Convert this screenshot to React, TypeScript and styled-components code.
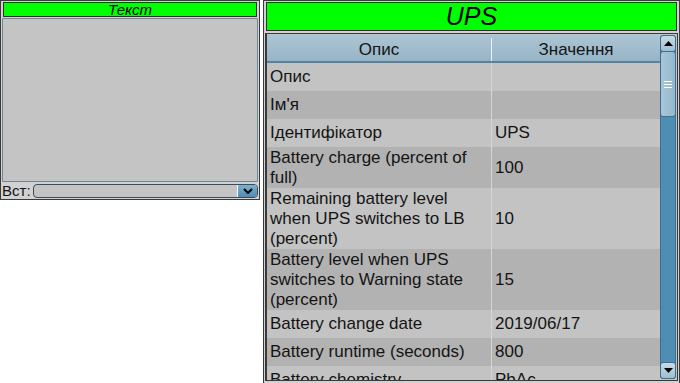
import React from 'react';
import styled, { createGlobalStyle } from 'styled-components';

const Global = createGlobalStyle`
  body {
    margin: 0;
    background: #ffffff;
    font-family: "Liberation Sans", Arial, sans-serif;
    color: #141414;
  }
`;

const Screen = styled.div`
  display: flex;
  align-items: flex-start;
  gap: 3px;
  width: 680px;
  height: 383px;
  overflow: hidden;
`;

const Panel = styled.div<{ $w: number; $h: number }>`
  box-sizing: border-box;
  width: ${p => p.$w}px;
  height: ${p => p.$h}px;
  border: 1px solid #3a3a3a;
  background: #d2d2d2;
  display: flex;
  flex-direction: column;
  padding: 1px;
  gap: 1px;
`;

const Title = styled.div<{ $h: number; $size: number }>`
  box-sizing: border-box;
  height: ${p => p.$h}px;
  margin: 0 1px;
  background: #00ff00;
  border: 1px solid #2e2e2e;
  font-style: italic;
  font-size: ${p => p.$size}px;
  line-height: ${p => p.$h - 2}px;
  text-align: center;
  color: #000;
  flex: none;
`;

const Canvas = styled.div`
  flex: 1;
  background: #c4c4c4;
  border: 1px solid #6c8796;
  border-radius: 1px;
`;

const Footer = styled.div`
  display: flex;
  align-items: center;
  height: 15px;
  gap: 2px;
  flex: none;
`;

const Label = styled.span`
  font-size: 15px;
  line-height: 15px;
  color: #141414;
`;

const Combo = styled.div`
  flex: 1;
  box-sizing: border-box;
  height: 14px;
  border: 1px solid #3c4c56;
  border-radius: 4px;
  background: #c4c4c4;
  display: flex;
  justify-content: flex-end;
  overflow: hidden;
`;

const ComboButton = styled.div`
  width: 19px;
  background: linear-gradient(#7fb0cc, #4f8db5);
  border-left: 1px solid #ffffff;
  display: flex;
  align-items: center;
  justify-content: center;
`;

const Table = styled.div`
  flex: 1;
  display: flex;
  margin: 1px 0 1px 0;
  border: 1px solid #3a3a3a;
  border-left-width: 2px;
  background: #c4c4c4;
  overflow: hidden;
`;

const Body = styled.div`
  flex: 1;
  display: flex;
  flex-direction: column;
  overflow: hidden;
`;

const Row = styled.div<{ $dark?: boolean; $min?: number }>`
  display: grid;
  grid-template-columns: 224px 1fr;
  min-height: ${p => p.$min ?? 28}px;
  background: ${p => (p.$dark ? '#b2b2b2' : '#c3c3c3')};
  flex: none;
`;

const HeadRow = styled(Row)`
  box-sizing: border-box;
  height: 28px;
  min-height: 28px;
  margin-top: 1px;
  background: linear-gradient(#acc5d4, #97b4c6);
  border-bottom: 2px solid #5583a2;
`;

const HeadCell = styled.div<{ $sep?: boolean }>`
  display: flex;
  align-items: center;
  justify-content: center;
  font-size: 17px;
  border-left: ${p => (p.$sep ? '1px solid #eef3f6' : 'none')};
  margin: ${p => (p.$sep ? '3px 0 0' : '0')};
  padding-top: ${p => (p.$sep ? '0' : '3px')};
`;

const Cell = styled.div<{ $sep?: boolean }>`
  display: flex;
  align-items: center;
  padding: 0 3px;
  font-size: 17px;
  line-height: 20px;
  border-left: ${p => (p.$sep ? '1px solid #d6d6d6' : 'none')};
`;

const ScrollBar = styled.div`
  width: 16px;
  margin: 1px 1px 1px 0;
  display: flex;
  flex-direction: column;
  background: #4f8db5;
  border: 1px solid #3b6e90;
  border-radius: 3px;
  box-sizing: border-box;
`;

const Arrow = styled.div`
  height: 15px;
  flex: none;
  background: linear-gradient(#c8dbe6, #9fbfd1);
  border: 1px solid #3b6e90;
  border-radius: 3px;
  margin: -1px;
  display: flex;
  align-items: center;
  justify-content: center;
`;

const Thumb = styled.div`
  height: 64px;
  flex: none;
  background: linear-gradient(90deg, #a9c7d8, #93b7cb);
  border: 1px solid #3b6e90;
  border-radius: 3px;
  margin: 0 -1px;
  display: flex;
  flex-direction: column;
  align-items: center;
  justify-content: center;
  gap: 2px;
`;

const Grip = styled.div`
  width: 8px;
  height: 1px;
  background: #ffffff;
`;

const Track = styled.div`
  flex: 1;
`;

const rows: [string, string, number?][] = [
  ['Опис', ''],
  ["Ім'я", ''],
  ['Ідентифікатор', 'UPS'],
  ['Battery charge (percent of full)', '100', 41],
  ['Remaining battery level when UPS switches to LB (percent)', '10', 61],
  ['Battery level when UPS switches to Warning state (percent)', '15', 61],
  ['Battery change date', '2019/06/17'],
  ['Battery runtime (seconds)', '800'],
  ['Battery chemistry', 'PbAc'],
];

const Tri = ({ up }: { up?: boolean }) => (
  <svg width="9" height="5" viewBox="0 0 9 5">
    <path d={up ? 'M0 5 L4.5 0 L9 5 Z' : 'M0 0 L4.5 5 L9 0 Z'} fill="#000" />
  </svg>
);

export default function App() {
  return (
    <Screen>
      <Global />
      <Panel $w={260} $h={200}>
        <Title $h={15} $size={15}>Текст</Title>
        <Canvas />
        <Footer>
          <Label>Вст:</Label>
          <Combo>
            <ComboButton>
              <svg width="10" height="6" viewBox="0 0 10 6">
                <path d="M1 1 L5 5 L9 1" stroke="#000" strokeWidth="2" fill="none" />
              </svg>
            </ComboButton>
          </Combo>
        </Footer>
      </Panel>
      <Panel $w={417} $h={384}>
        <Title $h={29} $size={25}>UPS</Title>
        <Table>
          <Body>
            <HeadRow>
              <HeadCell>Опис</HeadCell>
              <HeadCell $sep>Значення</HeadCell>
            </HeadRow>
            {rows.map(([k, v, h], i) => (
              <Row key={k} $dark={i % 2 === 1} $min={h}>
                <Cell>{k}</Cell>
                <Cell $sep>{v}</Cell>
              </Row>
            ))}
          </Body>
          <ScrollBar>
            <Arrow><Tri up /></Arrow>
            <Thumb>
              <Grip />
              <Grip />
              <Grip />
            </Thumb>
            <Track />
            <Arrow><Tri /></Arrow>
          </ScrollBar>
        </Table>
      </Panel>
    </Screen>
  );
}
